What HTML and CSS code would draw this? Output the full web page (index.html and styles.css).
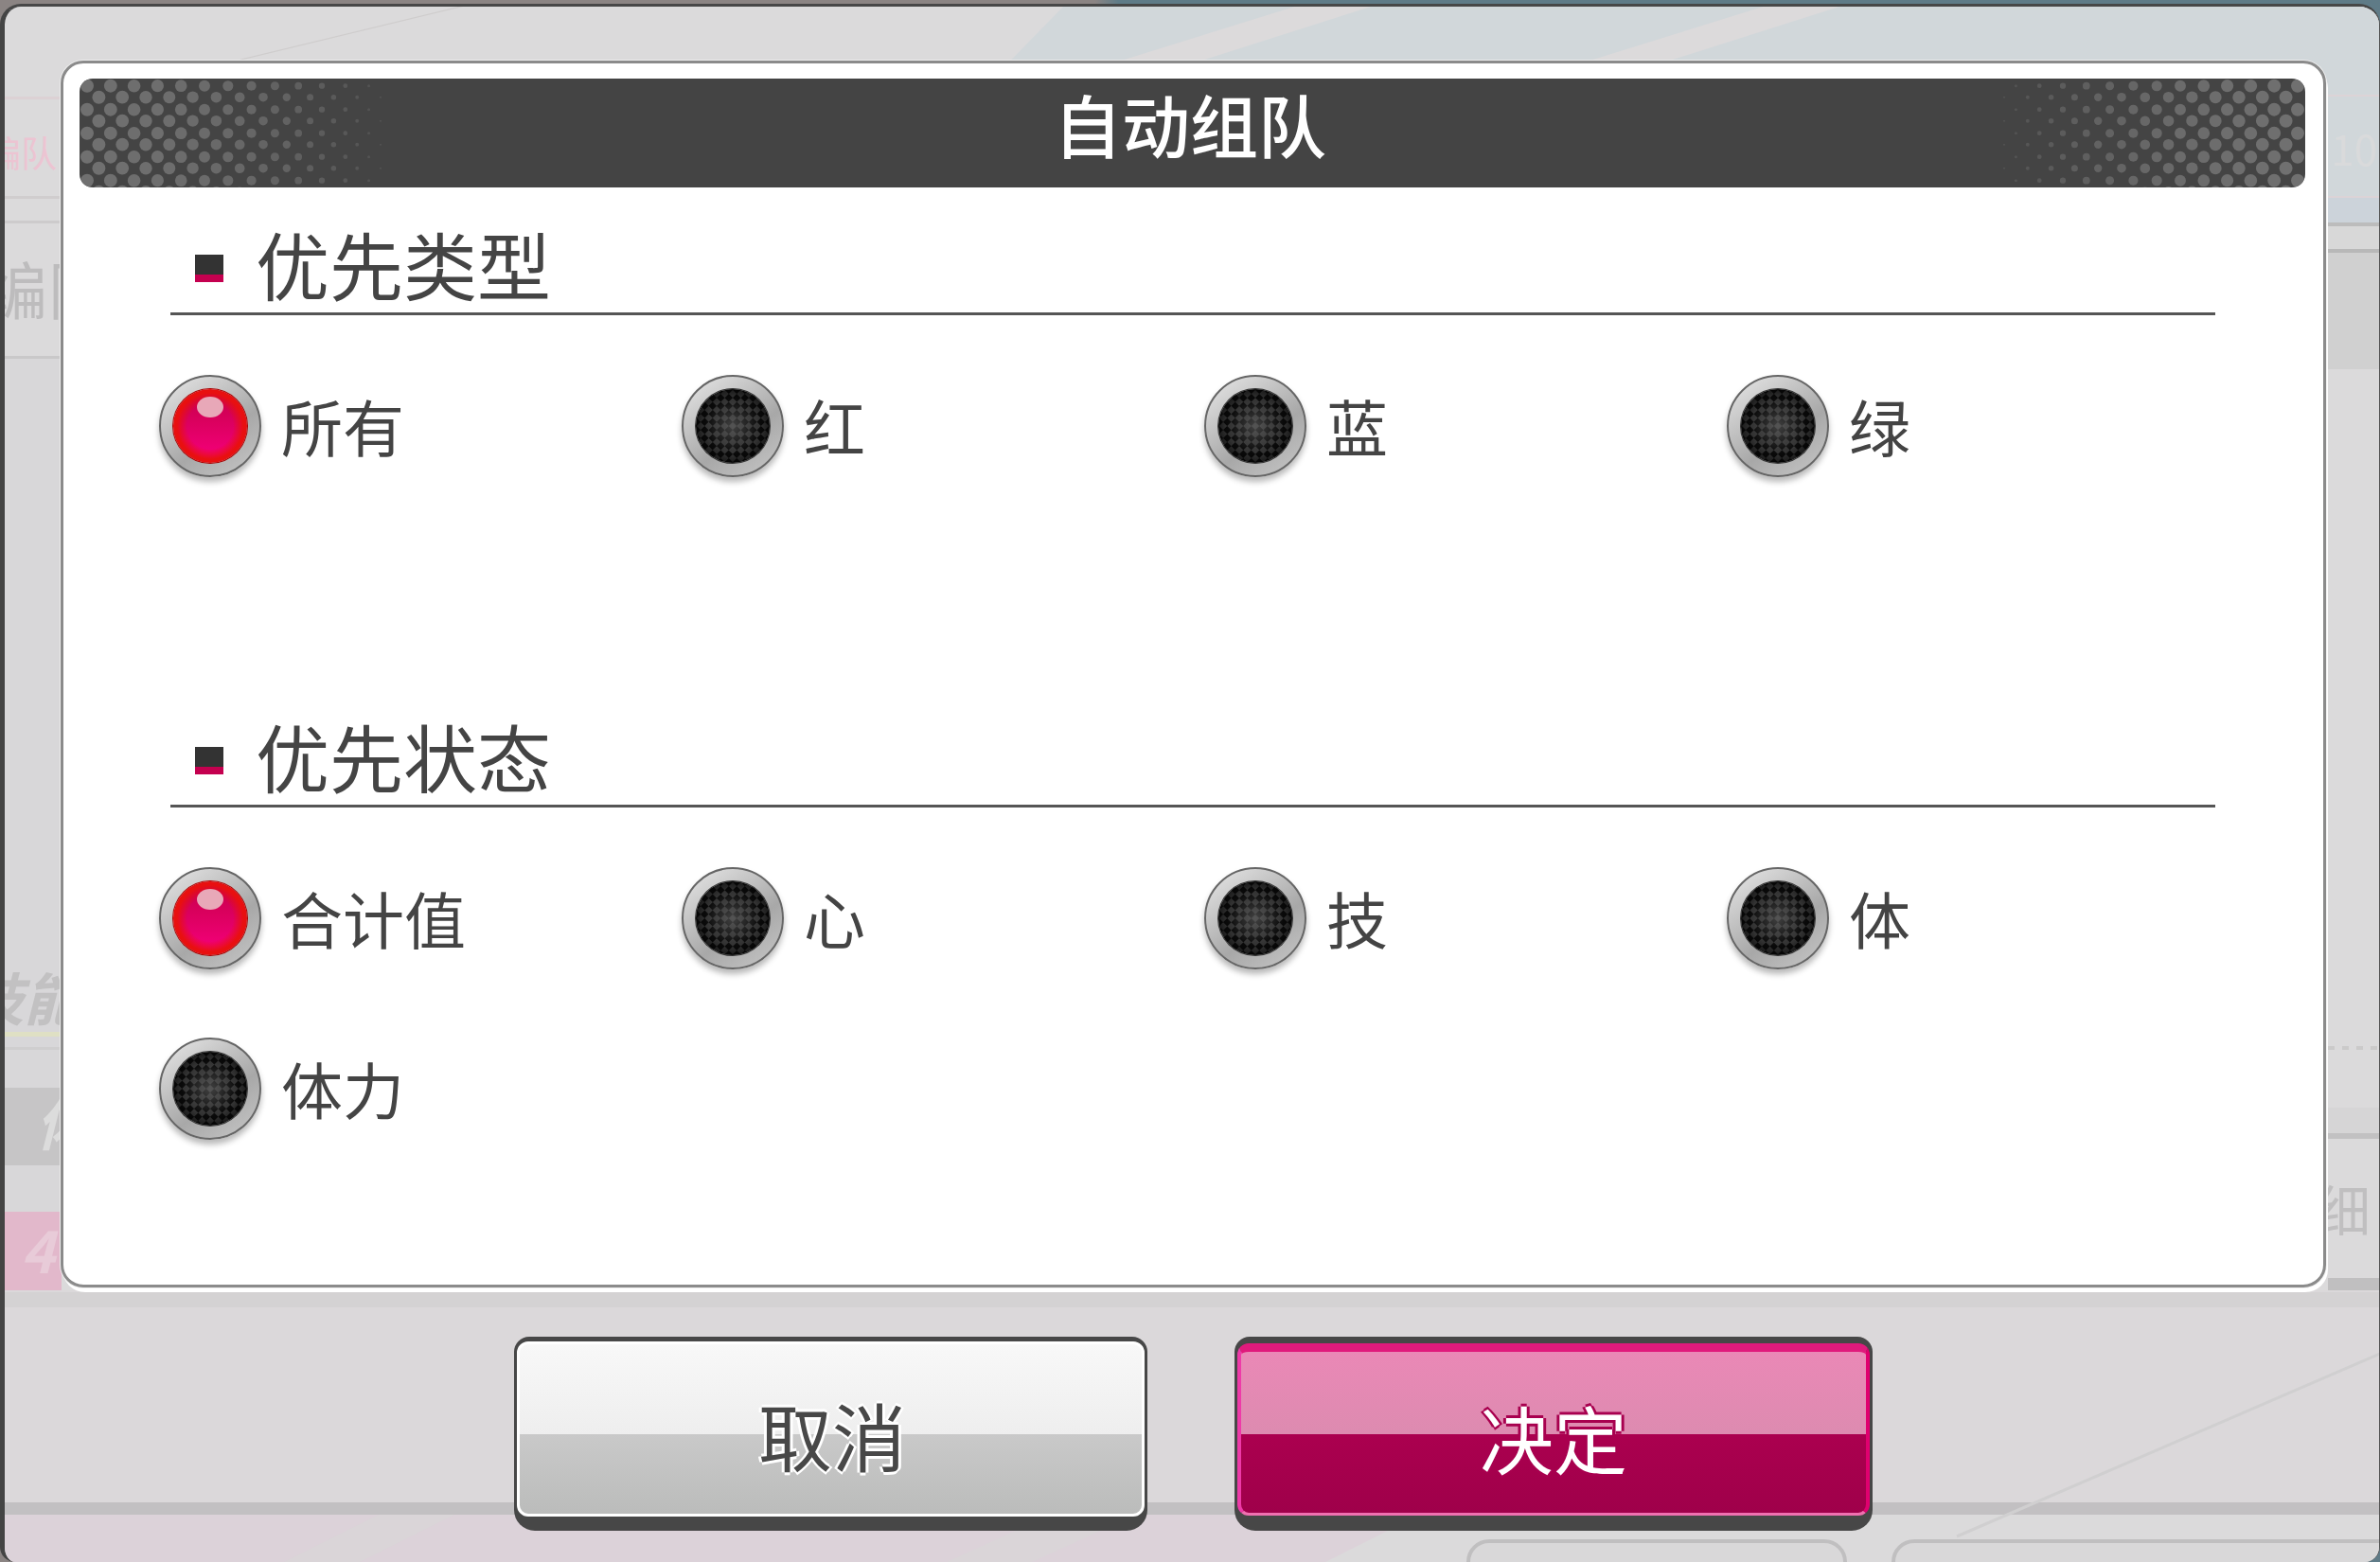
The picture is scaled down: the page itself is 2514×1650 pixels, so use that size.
FILE: index.html
```html
<!DOCTYPE html>
<html lang="zh-CN">
<head>
  <meta charset="UTF-8">
  <meta name="viewport" content="width=device-width, initial-scale=1.0">
  <title>自动组队</title>
  <link rel="stylesheet" href="styles.css">
</head>

<body>
  <div class="screen">
    <div class="window">

      <!-- the dimmed team screen behind the dialog -->
      <svg class="backdrop" viewBox="0 0 2514 1650" aria-hidden="true">
        <polygon points="1130,0 2514,0 2514,235 900,235" fill="#d1d7da"/>
        <polygon points="1390,0 1470,0 1250,70 1165,70" fill="#dcdadb"/>
        <polygon points="1885,0 1965,0 1745,70 1660,70" fill="#dcdadb"/>
        <polygon points="513,0 518,0 245,66 240,66" fill="#cfcdcd"/>

        <rect x="0" y="102" width="65" height="3" fill="#dcd1d4"/>
        <rect x="0" y="207" width="65" height="3" fill="#d0cdce"/>
        <rect x="0" y="233" width="65" height="3" fill="#cdcbcc"/>
        <rect x="0" y="376" width="65" height="3" fill="#c9c8c9"/>
        <rect x="0" y="379" width="65" height="901" fill="#d8d7d9"/>
        <rect x="0" y="1149" width="65" height="82" fill="#c6c5c6"/>
        <rect x="0" y="1280" width="65" height="83" fill="#e2b8cb"/>
        <rect x="0" y="1090" width="65" height="5" fill="#dfe0c4"/>
        <rect x="0" y="1106" width="65" height="3" fill="#cfcecf"/>
        <text class="ghost" x="-16" y="176" font-size="38" fill="#ecc4d2">编队</text>
        <text class="ghost" x="-16" y="332" font-size="66" fill="#bdbcbd">编队</text>
        <text class="ghost ghost-slant" x="-35" y="1078" font-size="60" fill="#c2c1c2">技能</text>
        <text class="ghost ghost-slant" x="38" y="1210" font-size="60" fill="#dcdcdc">体</text>
        <text class="ghost ghost-slant" x="22" y="1345" font-size="60" fill="#e8cbd8">4</text>

        <rect x="2459" y="100" width="55" height="2" fill="#dcd3d6"/>
        <rect x="2459" y="207" width="55" height="2" fill="#dcd3d6"/>
        <rect x="2459" y="209" width="55" height="26" fill="#ccd3da"/>
        <rect x="2459" y="235" width="55" height="4" fill="#bcbcbc"/>
        <rect x="2459" y="239" width="55" height="24" fill="#d8d8d8"/>
        <rect x="2459" y="263" width="55" height="4" fill="#b8b8b8"/>
        <rect x="2459" y="267" width="55" height="123" fill="#d0d0d0"/>
        <line x1="2459" y1="1107" x2="2514" y2="1107" stroke="#cbcaca" stroke-width="4" stroke-dasharray="7 8"/>
        <rect x="2459" y="1170" width="55" height="27" fill="#d6d5d6"/>
        <rect x="2459" y="1197" width="55" height="6" fill="#c2c1c2"/>
        <rect x="2459" y="1350" width="55" height="15" fill="#c0bfc0"/>
        <text class="ghost" x="2462" y="175" font-size="44" fill="#d9dadb">10</text>
        <text class="ghost" x="2446" y="1301" font-size="58" fill="#c0bfc0">细</text>

        <rect x="0" y="1363" width="2514" height="224" fill="#dbd8da"/>
        <rect x="0" y="1365" width="2514" height="16" fill="#d4d2d3"/>
        <polygon points="0,1600 1500,1600 1400,1650 0,1650" fill="#dcd2d9"/>
        <polygon points="400,1600 480,1600 380,1650 300,1650" fill="#dad5d8"/>
        <polygon points="1110,1600 1200,1600 1090,1650 1000,1650" fill="#dad5d8"/>
        <rect x="0" y="1587" width="2514" height="13" fill="#c2c0c2"/>
        <line x1="2514" y1="1430" x2="2067" y2="1623" stroke="#d0cfd0" stroke-width="3"/>
        <rect x="1551" y="1628" width="398" height="60" rx="22" fill="#d9d8d9" stroke="#c0bfc0" stroke-width="4"/>
        <rect x="2000" y="1628" width="560" height="60" rx="22" fill="#d9d8d9" stroke="#c0bfc0" stroke-width="4"/>
      </svg>

      <div class="dialog">
        <div class="title-bar">
          <svg class="title-dots" viewBox="0 0 2351 115" aria-hidden="true"></svg>
          <h1>自动组队</h1>
        </div>

        <div class="section">
          <div class="section-head">
            <span class="section-mark"></span>
            <h2>优先类型</h2>
          </div>
          <div class="options">
            <div class="option"><span class="radio radio-on"><span class="radio-dot"></span></span><span class="label">所有</span></div>
            <div class="option"><span class="radio radio-off"><span class="radio-dot"></span></span><span class="label">红</span></div>
            <div class="option"><span class="radio radio-off"><span class="radio-dot"></span></span><span class="label">蓝</span></div>
            <div class="option"><span class="radio radio-off"><span class="radio-dot"></span></span><span class="label">绿</span></div>
          </div>
        </div>

        <div class="section">
          <div class="section-head">
            <span class="section-mark"></span>
            <h2>优先状态</h2>
          </div>
          <div class="options">
            <div class="option"><span class="radio radio-on"><span class="radio-dot"></span></span><span class="label">合计值</span></div>
            <div class="option"><span class="radio radio-off"><span class="radio-dot"></span></span><span class="label">心</span></div>
            <div class="option"><span class="radio radio-off"><span class="radio-dot"></span></span><span class="label">技</span></div>
            <div class="option"><span class="radio radio-off"><span class="radio-dot"></span></span><span class="label">体</span></div>
            <div class="option"><span class="radio radio-off"><span class="radio-dot"></span></span><span class="label">体力</span></div>
          </div>
        </div>
      </div>

      <div class="actions">
        <button class="btn btn-cancel"><span class="btn-face">取消</span></button>
        <button class="btn btn-ok"><span class="btn-face">决定</span></button>
      </div>
    </div>
  </div>

  <script src="app.js"></script>
</body>
</html>
```

FILE: styles.css
```css
body {
  margin: 0;
  padding: 0;
  font-family: "Noto Sans CJK SC", "Noto Sans", sans-serif;
  background-color: #5f7b87;
}

.screen {
  width: 2514px;
  height: 1650px;
  overflow: hidden;
  background: linear-gradient(90deg, #8b8483 0, #8b8483 46%, #5f7b87 47%, #5f7b87 100%);
  padding-top: 4px;
  box-sizing: border-box;
}

.window {
  position: relative;
  width: 2514px;
  height: 1646px;
  box-sizing: border-box;
  overflow: hidden;
  padding: 57px 0 0 59px;
  background-color: #dbdadb;
  border-top: 3px solid #474747;
  border-left: 5px solid #444;
  border-right: 1px solid #555;
  border-radius: 22px 22px 16px 16px;
}

.backdrop {
  position: absolute;
  left: -5px;
  top: -7px;
  width: 2514px;
  height: 1650px;
}

.ghost {
  font-family: "Noto Sans CJK SC", sans-serif;
}

.ghost-slant {
  font-style: italic;
  font-weight: 700;
}

.dialog {
  position: relative;
  width: 2393px;
  height: 1296px;
  box-sizing: border-box;
  padding: 16px 0 0 17px;
  background-color: #fff;
  border: 3px solid #8b8b8b;
  border-radius: 24px;
  box-shadow: 0 0 0 1px #eee, 2px 5px 0 #fff;
}

.title-bar {
  position: relative;
  width: 2351px;
  height: 115px;
  display: flex;
  align-items: center;
  justify-content: center;
  overflow: hidden;
  background-color: #444;
  border-radius: 14px;
}

.title-dots {
  position: absolute;
  left: 0;
  top: 0;
  width: 100%;
  height: 100%;
}

h1 {
  position: relative;
  margin: 0 5px 22px 0;
  color: #fff;
  font-size: 72px;
  font-weight: 500;
  line-height: 1;
}

.section {
  height: 520px;
  padding-left: 96px;
}

.section-head {
  width: 2160px;
  height: 135px;
  box-sizing: border-box;
  display: flex;
  align-items: flex-end;
  border-bottom: 3px solid #555;
  padding: 0 0 0 26px;
}

.section-mark {
  width: 30px;
  height: 29px;
  margin: 0 34px 32px 0;
  background: linear-gradient(#333 0, #333 72%, #c4004f 72%, #c4004f 100%);
}

h2 {
  margin: 0 0 6px 0;
  color: #444;
  font-size: 78px;
  font-weight: 400;
  line-height: 92px;
}

.options {
  display: grid;
  grid-template-columns: repeat(4, 552px);
  row-gap: 72px;
  margin: 63px 0 0 -12px;
}

.option {
  display: flex;
  align-items: center;
}

.radio {
  flex: none;
  width: 108px;
  height: 108px;
  box-sizing: border-box;
  display: flex;
  align-items: center;
  justify-content: center;
  border: 2px solid #666;
  border-radius: 50%;
  background: linear-gradient(145deg, #e8e8e8, #a8a8a8 60%, #c8c8c8);
  box-shadow: 0 5px 6px rgba(0, 0, 0, 0.28);
}

.radio-dot {
  position: relative;
  width: 78px;
  height: 78px;
  border-radius: 50%;
}

.radio-on .radio-dot {
  background:
    radial-gradient(closest-side, rgba(232, 15, 16, 0) 62%, #e81010 90%),
    linear-gradient(#c40046, #f8007e);
  box-shadow: 0 0 0 1px #a80000;
}

.radio-on .radio-dot::after {
  content: "";
  position: absolute;
  left: 25px;
  top: 8px;
  width: 28px;
  height: 22px;
  border-radius: 50%;
  background-color: #e8a8b8;
}

.radio-off .radio-dot {
  transform: rotate(45deg);
  background:
    radial-gradient(closest-side, rgba(110, 110, 110, 0.55), rgba(0, 0, 0, 0.05) 75%, rgba(0, 0, 0, 0.5)),
    repeating-conic-gradient(#0a0a0a 0 25%, #343434 0 50%) 0 0 / 12px 12px;
  box-shadow: 0 0 0 1px #333;
}

.label {
  margin: -2px 0 0 21px;
  color: #444;
  font-size: 65px;
  line-height: 1;
}

.actions {
  position: relative;
  display: flex;
  align-items: flex-start;
  gap: 92px;
  margin: 52px 0 0 479px;
}

.btn {
  display: block;
  padding: 0;
  border: 0;
  height: 205px;
  box-sizing: border-box;
  background-color: #474747;
  border-radius: 16px 16px 22px 22px;
  font-family: inherit;
  cursor: pointer;
}

.btn-face {
  height: 100%;
  box-sizing: border-box;
  display: flex;
  align-items: center;
  justify-content: center;
  padding-top: 10px;
  font-size: 78px;
  line-height: 1;
  border-radius: 12px;
}

.btn-cancel {
  width: 669px;
  padding: 5px 3px 15px;
}

.btn-cancel .btn-face {
  color: #484848;
  border: 3px solid #fff;
  padding-left: 3px;
  background: linear-gradient(#f8f8f8 0, #eeeeee 53%, #c9c9c9 53%, #bbbcbb 100%);
  text-shadow: 3px 0 0 #fff, -3px 0 0 #fff, 0 3px 0 #fff, 0 -3px 0 #fff;
}

.btn-ok {
  width: 674px;
  padding: 7px 3px 16px;
}

.btn-ok .btn-face {
  color: #fff;
  border-style: solid;
  border-color: #e01a7c #e0006f #f070b0 #ee3aa8;
  border-width: 9px 4px 3px 4px;
  background: linear-gradient(#ea88b6 0, #dd8bb0 51%, #ab004f 51%, #9f004a 100%);
  text-shadow: 3px 0 0 #a8004f, -3px 0 0 #a8004f, 0 3px 0 #a8004f, 0 -3px 0 #a8004f;
}
```

FILE: app.js
```js
// halftone dots at both ends of the title bar, shrinking towards the middle
const dots = document.querySelector('.title-dots');
const barWidth = 2351;
const fadeWidth = 320;
let circles = '';

for (let col = 0; col < 26; col++) {
  const offset = 8 + col * 12.4;
  const amount = offset / fadeWidth;
  const r = 7 - 6 * amount * amount;
  const opacity = 1 - 0.7 * amount * amount;
  for (let y = col % 2 ? 19.7 : 7.7; y < 125; y += 25) {
    circles += `<circle cx="${offset}" cy="${y}" r="${r}" fill="#707070" opacity="${opacity}"/>`;
    circles += `<circle cx="${barWidth - offset}" cy="${y}" r="${r}" fill="#707070" opacity="${opacity}"/>`;
  }
}

dots.innerHTML = circles;
```
